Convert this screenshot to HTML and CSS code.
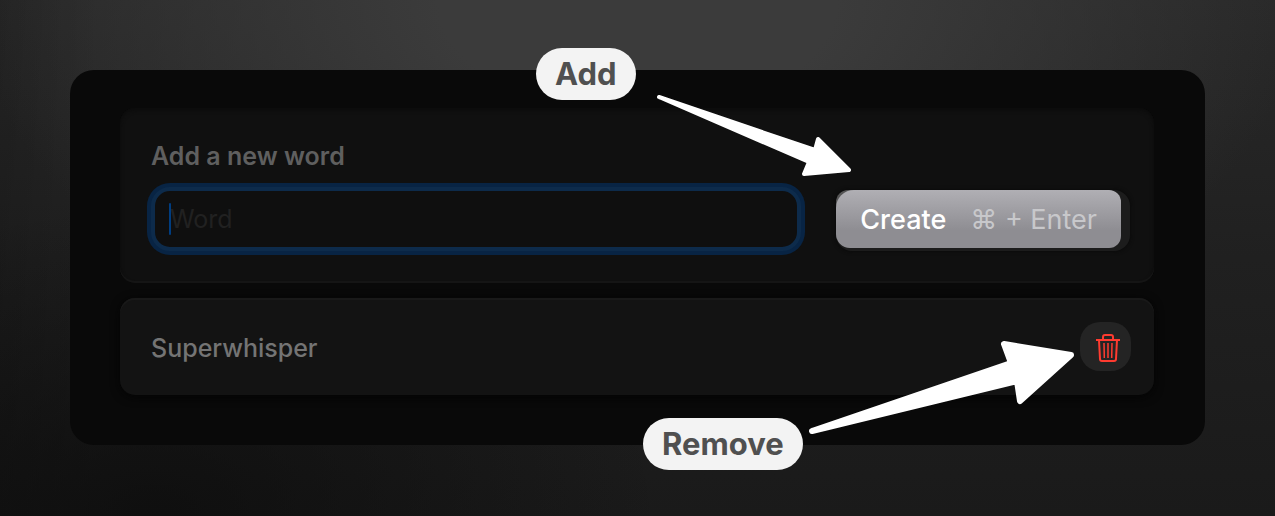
FILE: index.html
```html
<!DOCTYPE html>
<html lang="en">
<head>
<meta charset="utf-8">
<meta name="viewport" content="width=device-width, initial-scale=1">
<title>Vocabulary</title>
<link rel="stylesheet" href="styles.css">
</head>
<body>
<main class="panel">
  <form class="card add-card">
    <label class="title" for="word">Add a new word</label>
    <div class="add-row">
      <div class="field">
        <input class="word-input" id="word" type="text" placeholder="Word">
        <span class="caret"></span>
      </div>
      <div class="button-plate">
        <button class="create" type="button"><span>Create</span><span class="shortcut">⌘ + Enter</span></button>
      </div>
    </div>
  </form>
  <section class="card word-card">
    <span class="word">Superwhisper</span>
    <button class="remove" type="button" aria-label="Remove Superwhisper">
      <svg width="26" height="30" viewBox="0 0 26 30" fill="none" stroke="#ff3b30" stroke-width="2" stroke-linejoin="round">
        <path d="M1 7h24M8 7V4q0-2 2-2h6q2 0 2 2v3M4 7l1 19q0 2 2 2h12q2 0 2-2l1-19"/>
        <path d="M9 10l.3 15M13 10v15M17 10l-.3 15" stroke-width="1.5"/>
      </svg>
    </button>
  </section>
  <svg class="arrows" width="420" height="320" viewBox="650 90 420 320" aria-hidden="true">
    <g fill="#fff" stroke="#fff" stroke-linejoin="round">
      <path stroke-width="4" d="M659 97L815 150L818 139L849 170L804 174L809 162Z"/>
      <path stroke-width="6" d="M812 431L1011 363L1004 344L1071 355L1020 401L1017 381Z"/>
    </g>
  </svg>
  <span class="callout callout-add">Add</span>
  <span class="callout callout-remove">Remove</span>
</main>
</body>
</html>
```

FILE: styles.css
```css
* { box-sizing: border-box; }

body {
  margin: 0;
  min-height: 100vh;
  padding: 70px;
  font-family: Inter, "Liberation Sans", sans-serif;
  font-size: 25px;
  line-height: 32px;
  background:
    radial-gradient(ellipse 52% 75% at 50% 0, #3b3b3b 30%, rgba(59, 59, 59, 0)),
    radial-gradient(ellipse 40% 60% at 12% 100%, rgba(10, 10, 10, .7), rgba(10, 10, 10, 0)),
    linear-gradient(90deg, rgba(0, 0, 0, .15), transparent 8%),
    linear-gradient(#292929, #202020 50%, #1a1a1a);
}

.panel {
  position: relative;
  display: flex;
  flex-direction: column;
  gap: 15px;
  padding: 38px 51px 50px 50px;
  border-radius: 24px;
  background: #090909;
}

.card { border-radius: 15px; }

.add-card {
  display: flex;
  flex-direction: column;
  gap: 15px;
  padding: 32px 24px 32px 31px;
  background: #101010;
  box-shadow: inset 0 -2px #151515, inset 0 2px 4px #0b0b0b;
}

.title {
  color: #5f5f5f;
  font-weight: 600;
}

.add-row {
  display: flex;
  align-items: flex-end;
  gap: 35px;
}

.field {
  position: relative;
  flex: 1;
  display: flex;
}

.word-input {
  width: 100%;
  height: 64px;
  padding: 0 15px;
  border: 4px solid #0d2b4b;
  border-radius: 19px;
  outline: none;
  box-shadow: 0 0 0 4px #082444;
  background: #0f0f0f;
  color: #ccc;
  font: inherit;
}

.word-input::placeholder { color: #212121; opacity: 1; }

.caret {
  position: absolute;
  top: 16px;
  left: 18px;
  width: 2px;
  height: 32px;
  border-radius: 1px;
  background: #003d80;
}

.button-plate {
  padding: 0 9px 3px 0;
  border-radius: 12px 16px 16px 16px;
  background:
    linear-gradient(#555, #555) 0 0 / 24px 24px no-repeat,
    #1c1c1c;
  box-shadow: 0 0 4px #080808;
}

.create {
  display: flex;
  align-items: center;
  gap: 24px;
  height: 58px;
  padding: 2px 24px 0;
  border: 0;
  border-radius: 18px 12px 12px 14px;
  background: linear-gradient(#b0afb4, #8e8d92 70%);
  color: #fff;
  font: inherit;
  font-size: 27px;
  font-weight: 500;
  white-space: nowrap;
}

.shortcut { color: #c8c8cb; font-weight: 400; }

.word-card {
  display: flex;
  align-items: center;
  justify-content: space-between;
  padding: 24px 23px;
  padding-left: 31px;
  background: #131313;
  box-shadow: inset 0 2px #191919, 0 2px 10px #040404;
}

.word {
  padding-top: 3px;
  color: #747474;
  font-weight: 500;
}

.remove {
  display: grid;
  place-items: center;
  width: 51px;
  height: 49px;
  padding: 2px 0 0 5px;
  border: 0;
  border-radius: 20px;
  background: #242424;
}

.arrows {
  position: absolute;
  top: 20px;
  left: 580px;
  overflow: visible;
}

.callout {
  position: absolute;
  padding: 10px 19px;
  border-radius: 26px;
  background: #f3f3f3;
  color: #505050;
  font-size: 31px;
  font-weight: 700;
}

.callout-add { top: -22px; left: 466px; }
.callout-remove { top: 348px; left: 573px; }
```
